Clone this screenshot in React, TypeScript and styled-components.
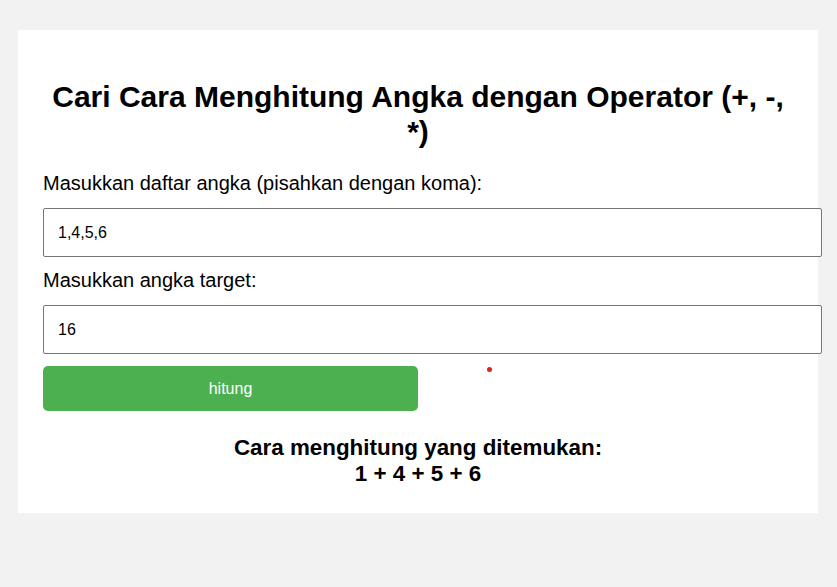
import React from "react";
import styled, { createGlobalStyle } from "styled-components";

const Global = createGlobalStyle`
  html, body { margin: 0; padding: 0; background: #f2f2f2; }
  body { font-family: "Liberation Sans", Arial, sans-serif; color: #000; }
`;

const Page = styled.div`
  padding: 30px 19px 0 18px;
  display: flex;
  justify-content: flex-start;
`;

const Card = styled.div`
  width: 800px;
  box-sizing: border-box;
  background: #fff;
  padding: 25px 25px 26px;
  display: flex;
  flex-direction: column;
`;

const Title = styled.h1`
  margin: 25px 0 23px;
  font-size: 30px;
  font-weight: bold;
  text-align: center;
  line-height: 34.5px;
`;

const Label = styled.label`
  display: block;
  font-size: 20px;
  line-height: 23px;
  margin-bottom: 13px;
`;

const Input = styled.input<{ $mb: number }>`
  display: block;
  width: calc(100% - 1px);
  box-sizing: content-box;
  padding: 14px 14px;
  height: 19px;
  font-family: "Liberation Sans", Arial, sans-serif;
  font-size: 16px;
  color: #000;
  border: 1px solid #767676;
  border-radius: 2px;
  background: #fff;
  margin: 0 0 ${(p) => p.$mb}px;
  outline: none;
`;

const ButtonRow = styled.div`
  display: flex;
  align-items: flex-start;
`;

const Button = styled.button`
  width: 50%;
  height: 45px;
  background: #4caf50;
  color: #fff;
  border: none;
  border-radius: 5px;
  font-family: "Liberation Sans", Arial, sans-serif;
  font-size: 16px;
  cursor: pointer;
`;

const Dot = styled.span`
  width: 5px;
  height: 5px;
  border-radius: 50%;
  background: #e0201c;
  margin-left: 69px;
  margin-top: 1px;
`;

const Result = styled.div`
  margin-top: 24px;
  text-align: center;
  font-weight: bold;
  font-size: 22.4px;
  line-height: 25.8px;
`;

export default function App() {
  return (
    <>
      <Global />
      <Page>
        <Card>
          <Title>Cari Cara Menghitung Angka dengan Operator (+, -, *)</Title>
          <Label htmlFor="nums">Masukkan daftar angka (pisahkan dengan koma):</Label>
          <Input id="nums" $mb={12} defaultValue="1,4,5,6" />
          <Label htmlFor="target">Masukkan angka target:</Label>
          <Input id="target" $mb={12} defaultValue="16" />
          <ButtonRow>
            <Button>hitung</Button>
            <Dot />
          </ButtonRow>
          <Result>
            Cara menghitung yang ditemukan:
            <br />1 + 4 + 5 + 6
          </Result>
        </Card>
      </Page>
    </>
  );
}
